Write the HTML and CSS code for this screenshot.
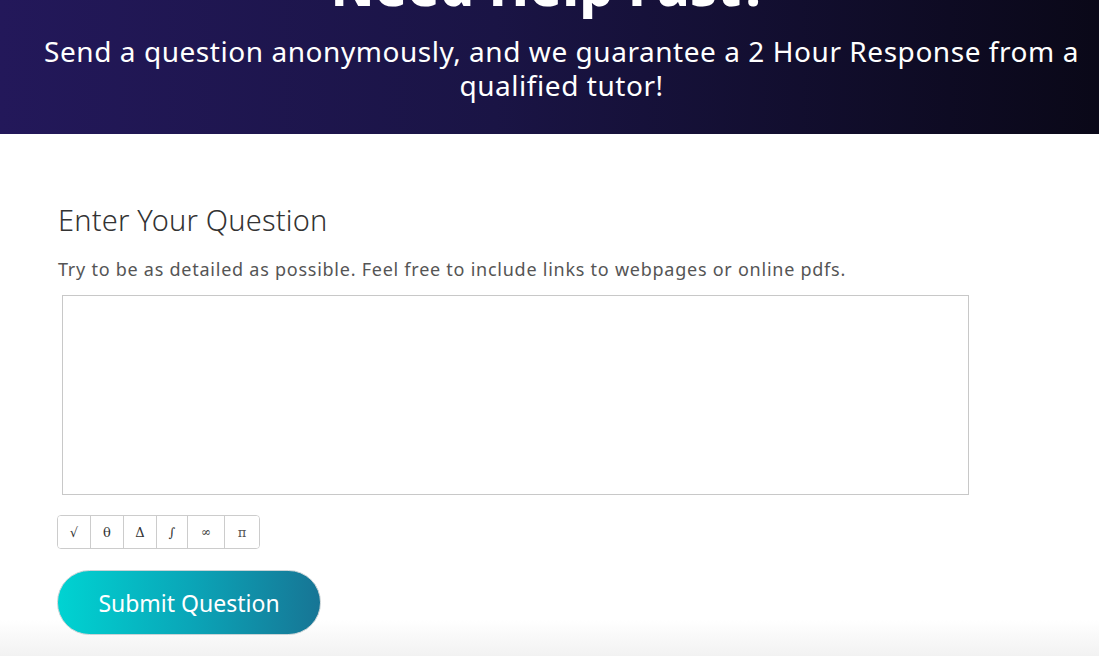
FILE: index.html
```html
<!DOCTYPE html>
<html lang="en">
<head>
<meta charset="utf-8">
<title>Need Help Fast?</title>
<link rel="stylesheet" href="styles.css">
</head>
<body>
<header class="hero">
  <h1 class="hero-title">Need Help Fast?</h1>
  <p class="hero-sub">Send a question anonymously, and we guarantee a 2 Hour Response from a qualified tutor!</p>
</header>
<main class="card">
  <h2 class="q-title">Enter Your Question</h2>
  <p class="q-hint">Try to be as detailed as possible. Feel free to include links to webpages or online pdfs.</p>
  <textarea class="q-input" aria-label="Your question"></textarea>
  <div class="symbols">
    <button class="sym" type="button">√</button>
    <button class="sym" type="button">θ</button>
    <button class="sym" type="button">Δ</button>
    <button class="sym" type="button">∫</button>
    <button class="sym" type="button">∞</button>
    <button class="sym" type="button">π</button>
  </div>
  <button class="submit" type="button">Submit Question</button>
</main>
</body>
</html>
```
FILE: styles.css
```css
html, body {
  margin: 0;
  padding: 0;
}
body {
  width: 1099px;
  height: 656px;
  overflow: hidden;
  font-family: "Noto Sans", "Liberation Sans", sans-serif;
  background: linear-gradient(to bottom, #ffffff 0, #ffffff 620px, #f2f2f2 656px);
}
.hero {
  height: 134px;
  box-sizing: border-box;
  background: linear-gradient(90deg, #23185a 0%, #1a1445 45%, #0a0818 100%);
  color: #fff;
  text-align: center;
  overflow: hidden;
}
.hero-title {
  margin: -42px 0 0;
  font-size: 53px;
  line-height: 56px;
  font-weight: 800;
  letter-spacing: 0.5px;
}
.hero-sub {
  margin: 20px auto 0;
  padding-left: 24px;
  max-width: 1070px;
  font-size: 28px;
  line-height: 34px;
  font-weight: 400;
  letter-spacing: 0.55px;
}
.card {
  padding: 66px 0 0 58px;
}
.q-title {
  margin: 0;
  font-size: 29px;
  line-height: 40px;
  font-weight: 300;
  letter-spacing: 0.2px;
  color: #333;
}
.q-hint {
  margin: 17px 0 0;
  font-size: 18px;
  line-height: 24px;
  font-weight: 400;
  letter-spacing: 0.75px;
  color: #555;
}
.q-input {
  display: block;
  box-sizing: border-box;
  margin: 14px 0 0 4px;
  width: 907px;
  height: 200px;
  border: 1px solid #c8c8c8;
  border-radius: 0;
  resize: none;
  outline: none;
  background: #fff;
}
.symbols {
  display: inline-flex;
  margin: 20px 0 0 -1px;
  border: 1px solid #ccc;
  border-radius: 4px;
  overflow: hidden;
  height: 34px;
  box-sizing: border-box;
  vertical-align: top;
}
.sym {
  border: 0;
  border-right: 1px solid #ccc;
  background: #fff;
  padding: 0;
  height: 32px;
  width: 33px;
  font-family: "DejaVu Serif", "Liberation Serif", serif;
  font-size: 13px;
  color: #333;
  cursor: pointer;
}
.sym:nth-child(4) { width: 31px; }
.sym:nth-child(5) { width: 37px; font-size: 12px; }
.sym:nth-child(6) { width: 34px; border-right: 0; color: #555; }
.submit {
  display: block;
  margin: 21px 0 0 -1px;
  width: 264px;
  height: 65px;
  border: 1px solid #c9d3d6;
  border-radius: 33px;
  background: linear-gradient(90deg, #00d3d2 0%, #0aa6b8 50%, #177595 100%);
  color: #fff;
  font-family: "Noto Sans", "Liberation Sans", sans-serif;
  font-size: 23px;
  font-weight: 400;
  cursor: pointer;
}
```
